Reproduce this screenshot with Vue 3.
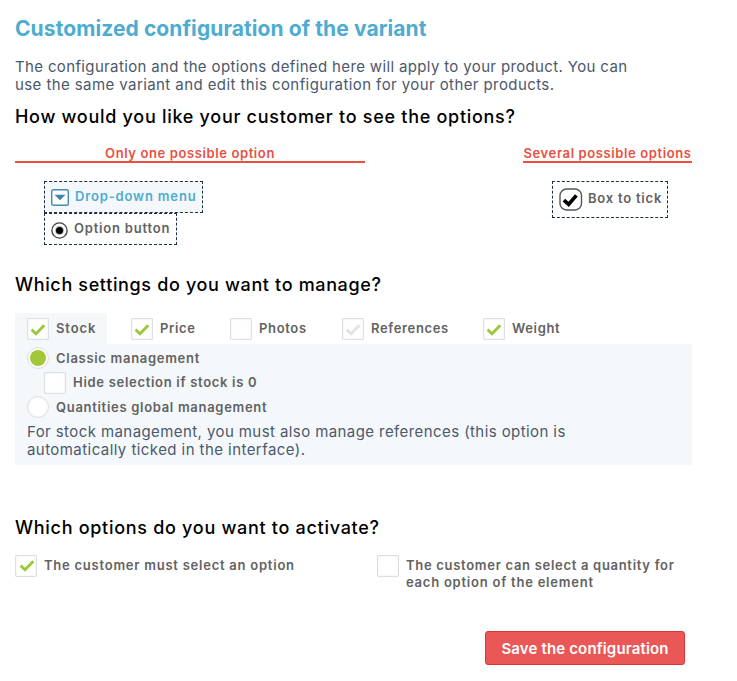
<script setup>
import { h } from 'vue'

const tabs = [
  { id: 'stock', label: 'Stock', state: 'on', active: true },
  { id: 'price', label: 'Price', state: 'on' },
  { id: 'photos', label: 'Photos', state: 'off' },
  { id: 'references', label: 'References', state: 'disabled' },
  { id: 'weight', label: 'Weight', state: 'on' },
]

const Check = (props) =>
  h('span', { class: ['check', props.state] }, [
    props.state === 'off'
      ? null
      : h('svg', { viewBox: '0 0 20 20', width: 20, height: 20 }, [
          h('path', { d: 'M3.6 10.6 L8 14.8 L16.3 6.3', fill: 'none', stroke: 'currentColor', 'stroke-width': 2.9 }),
        ]),
  ])
Check.props = ['state']
</script>

<template>
  <main class="config">
    <h1>Customized configuration of the variant</h1>
    <p class="intro">
      <span class="intro-a">The configuration and the options defined here will apply to your product. You can</span><br />
      <span class="intro-b">use the same variant and edit this configuration for your other products.</span>
    </p>

    <h2 class="q-display">How would you like your customer to see the options?</h2>
    <section class="display">
      <div class="single">
        <h3>Only one possible option</h3>
        <div class="choices">
          <div class="choice selected">
            <svg class="ico-select" width="18" height="17" viewBox="0 0 18 17">
              <rect x="0.7" y="0.7" width="16.6" height="15.6" rx="1.8" fill="#fff" stroke="#4589ad" stroke-width="1.4" />
              <path d="M3.5 5.7 H14.5 L9 11.2 Z" fill="#4184aa" />
            </svg>
            <span class="t-drop">Drop-down menu</span>
          </div>
          <div class="choice option">
            <svg class="ico-radio" width="17" height="17" viewBox="0 0 17 17">
              <circle cx="8.5" cy="8.5" r="7.6" fill="#fff" stroke="#444" stroke-width="1.4" />
              <circle cx="8.5" cy="8.5" r="4.6" fill="#bbb" />
              <circle cx="8.5" cy="8.5" r="3.5" fill="#000" />
            </svg>
            <span class="t-option">Option button</span>
          </div>
        </div>
      </div>
      <div class="several">
        <h3>Several possible options</h3>
        <div class="choice box">
          <svg width="24" height="24" viewBox="0 0 24 24">
            <rect x="1" y="1" width="21.5" height="21" rx="6.5" fill="#fff" stroke="#555" stroke-width="1.4" />
            <path d="M4.9 12.2 L9.6 16.4 L17.4 7.4" fill="none" stroke="#000" stroke-width="3.7" />
          </svg>
          <span class="t-box">Box to tick</span>
        </div>
      </div>
    </section>

    <h2 class="q-settings">Which settings do you want to manage?</h2>
    <section class="settings">
      <nav class="tabs">
        <div v-for="t in tabs" :key="t.id" class="tab" :class="[t.id, { active: t.active }]">
          <Check :state="t.state" /><span>{{ t.label }}</span>
        </div>
      </nav>
      <div class="panel">
        <div class="row classic"><span class="radio on"></span><span>Classic management</span></div>
        <div class="row hide"><Check state="off" /><span>Hide selection if stock is 0</span></div>
        <div class="row global"><span class="radio"></span><span>Quantities global management</span></div>
        <p class="note">
          <span class="note-a">For stock management, you must also manage references (this option is</span><br />
          <span class="note-b">automatically ticked in the interface).</span>
        </p>
      </div>
    </section>

    <h2 class="q-activate">Which options do you want to activate?</h2>
    <section class="activate">
      <div class="row must"><Check state="on" /><span>The customer must select an option</span></div>
      <div class="row quantity">
        <Check state="off" />
        <span>The customer can select a quantity for<br /><span class="second">each option of the element</span></span>
      </div>
    </section>

    <footer><button type="button">Save the configuration</button></footer>
  </main>
</template>

<style>
body { background: #fff; }
.check {
  box-sizing: border-box;
  flex: none;
  width: 22px;
  height: 22px;
  border: 1px solid #dce0e3;
  border-radius: 1px;
  background: #fff;
  box-shadow: inset 0 0 3px rgba(0, 0, 0, 0.07);
  color: #9fc738;
}
.check.disabled { color: #dfe3e7; }
.check svg { display: block; }
.must .check svg { transform: translate(1px, -1px); }
</style>

<style scoped>
.config {
  display: flow-root;
  box-sizing: border-box;
  width: 737px;
  height: 681px;
  padding: 0 45px 0 15px;
  overflow: hidden;
  font: 600 13px/17px Inter, "Liberation Sans", sans-serif;
  color: #626262;
  white-space: nowrap;
}
h1, h2, h3, p { margin: 0; }
h1 {
  margin-top: 16px;
  font-size: 21px;
  line-height: 26px;
  font-weight: 650;
  letter-spacing: 0.09px;
  color: #4dacd0;
}
h2 {
  font-size: 18px;
  line-height: 24px;
  font-weight: 500;
  color: #000;
}
p {
  font-size: 15px;
  line-height: 18px;
  font-weight: 400;
  color: #4c586b;
}
.intro { margin-top: 16px; }
.intro-a { letter-spacing: 0.355px; }
.intro-b { letter-spacing: 0.412px; }
.q-display { margin-top: 11px; letter-spacing: 0.71px; }

.display {
  display: flex;
  justify-content: space-between;
  height: 99px;
  margin-top: 15px;
}
.single { width: 350px; }
.several { width: 169px; }
h3 {
  height: 16px;
  padding-top: 1px;
  border-bottom: 2px solid #e9503f;
  font-size: 13px;
  line-height: 16px;
  font-weight: 600;
  letter-spacing: 0.61px;
  text-align: center;
  color: #e9503f;
}
.choices {
  display: flex;
  flex-direction: column;
  align-items: flex-start;
  margin: 18px 0 0 29px;
}
.choice {
  display: flex;
  box-sizing: border-box;
  align-items: flex-start;
  border: 1px dashed #1d3048;
}
.selected {
  width: 159px;
  height: 32px;
  padding: 6px 0 0 6px;
  gap: 6px;
  background: #f4f8fb;
  color: #4dacd0;
}
.ico-select { margin-top: 1px; }
.option { width: 133px; height: 32px; padding: 6px 0 0 6px; gap: 6px; }
.ico-radio { margin-top: 2px; }
.box { width: 116px; height: 37px; margin: 18px 0 0 29px; padding: 6px 0 0 6px; gap: 5px; }
.box span { margin-top: 2px; }
.t-drop { letter-spacing: 0.85px; }
.t-option { letter-spacing: 0.8px; }
.t-box { letter-spacing: 0.78px; }

.q-settings { margin-top: 30px; letter-spacing: 0.646px; }
.settings { margin-top: 16px; }
.tabs { display: grid; grid-template-columns: 92px 111px 112px 141px 100px; }
.tab {
  display: flex;
  box-sizing: border-box;
  height: 31px;
  padding: 5px 0 0 12px;
  gap: 7px;
}
.tab span:last-child { margin-top: 2px; letter-spacing: 0.65px; }
.tab.stock span:last-child { letter-spacing: 0.9px; }
.tab.price { margin-left: 12px; }
.tab.active { background: #f4f8fb; }
.panel {
  box-sizing: border-box;
  height: 121px;
  padding: 3px 12px 0;
  background: #f4f8fb;
}
.row { display: flex; gap: 7px; }
.row > span:last-child { margin-top: 2px; letter-spacing: 0.7px; }
.row.classic > span:last-child,
.row.global > span:last-child { margin-top: 3px; }
.classic { height: 25px; }
.hide { height: 24px; padding-left: 17px; }
.global { height: 22px; }
.radio {
  display: flex;
  box-sizing: border-box;
  flex: none;
  width: 22px;
  height: 22px;
  align-items: center;
  justify-content: center;
  border: 1px solid #dce0e3;
  border-radius: 50%;
  background: #fff;
  box-shadow: inset 0 0 3px rgba(0, 0, 0, 0.07);
}
.radio.on::after {
  content: "";
  width: 16px;
  height: 16px;
  border-radius: 50%;
  background: #a2c83a;
}
.note { margin-top: 5px; }
.note-a { letter-spacing: 0.415px; }
.note-b { letter-spacing: 0.436px; }

.q-activate { margin-top: 51px; letter-spacing: 0.707px; }
.activate { display: grid; grid-template-columns: 362px 1fr; margin-top: 15px; }
.must > span:last-child { letter-spacing: 0.758px; }
.second { letter-spacing: 0.77px; }

footer { display: flex; justify-content: flex-end; padding: 40px 7px 0 0; }
button {
  box-sizing: border-box;
  width: 200px;
  height: 34px;
  padding: 0;
  border: 1px solid #df3434;
  border-radius: 3px;
  background: #ea5757;
  color: #fff;
  font: inherit;
  font-size: 15px;
  letter-spacing: 0.15px;
}
</style>
